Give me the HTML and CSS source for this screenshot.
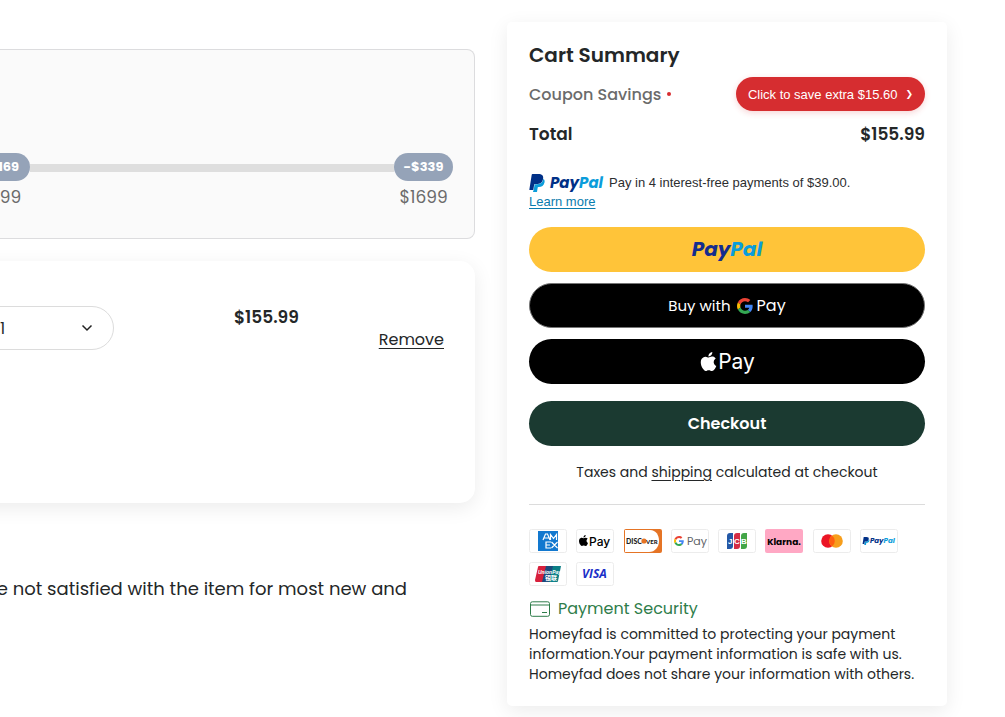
FILE: index.html
```html
<!DOCTYPE html>
<html lang="en">
<head>
<meta charset="utf-8">
<meta name="viewport" content="width=device-width, initial-scale=1">
<title>Cart</title>
<link rel="stylesheet" href="styles.css">
</head>
<body>
<svg class="sprite" aria-hidden="true">
  <symbol id="pp-mark" viewBox="0 0 24 24">
    <path fill="#0b9ddb" d="M21.222 6.917a3.35 3.35 0 0 0-.607-.541c-.013.076-.026.175-.041.254-.93 4.778-4.005 7.201-9.138 7.201h-2.19a.563.563 0 0 0-.556.479l-1.187 7.527h-.506l-.24 1.516a.56.56 0 0 0 .554.647h3.882c.46 0 .85-.334.922-.788.06-.26.76-4.852.816-5.09a.932.932 0 0 1 .923-.788h.58c3.76 0 6.705-1.528 7.565-5.946.36-1.847.174-3.388-.777-4.471z"/>
    <path fill="#003087" d="M7.076 21.337H2.47a.641.641 0 0 1-.633-.74L4.944.901C5.026.382 5.474 0 5.998 0h7.46c2.57 0 4.578.543 5.69 1.81 1.01 1.15 1.304 2.42 1.012 4.287-.023.143-.047.288-.077.437-.983 5.05-4.349 6.797-8.647 6.797h-2.19c-.524 0-.968.382-1.05.9l-1.12 7.106z"/>
  </symbol>
  <symbol id="apple-mark" viewBox="0 0 24 24">
    <path d="M12.152 6.896c-.948 0-2.415-1.078-3.96-1.04-2.04.027-3.91 1.183-4.961 3.014-2.117 3.675-.546 9.103 1.519 12.09 1.013 1.454 2.208 3.09 3.792 3.039 1.52-.065 2.09-.987 3.935-.987 1.831 0 2.35.987 3.96.948 1.637-.026 2.676-1.48 3.676-2.948 1.156-1.688 1.636-3.325 1.662-3.415-.039-.013-3.182-1.221-3.22-4.857-.026-3.04 2.48-4.494 2.597-4.559-1.429-2.09-3.623-2.324-4.39-2.376-2-.156-3.675 1.09-4.61 1.09zM15.53 3.83c.843-1.012 1.4-2.427 1.245-3.83-1.207.052-2.662.805-3.532 1.818-.78.896-1.454 2.338-1.273 3.714 1.338.104 2.715-.688 3.559-1.701"/>
  </symbol>
  <symbol id="google-mark" viewBox="0 0 48 48">
    <path fill="#ea4335" d="M24 9.5c3.54 0 6.71 1.22 9.21 3.6l6.85-6.85C35.9 2.38 30.47 0 24 0 14.62 0 6.51 5.38 2.56 13.22l7.98 6.19C12.43 13.72 17.74 9.5 24 9.5z"/>
    <path fill="#4285f4" d="M46.98 24.55c0-1.57-.15-3.09-.38-4.55H24v9.02h12.94c-.58 2.96-2.26 5.48-4.78 7.18l7.73 6c4.51-4.18 7.09-10.36 7.09-17.65z"/>
    <path fill="#fbbc05" d="M10.53 28.59c-.48-1.45-.76-2.99-.76-4.59s.27-3.14.76-4.59l-7.98-6.19C.92 16.46 0 20.12 0 24c0 3.88.92 7.54 2.56 10.78l7.97-6.19z"/>
    <path fill="#34a853" d="M24 48c6.48 0 11.93-2.13 15.89-5.81l-7.73-6c-2.15 1.45-4.92 2.3-8.16 2.3-6.26 0-11.57-4.22-13.47-9.91l-7.98 6.19C6.51 42.62 14.62 48 24 48z"/>
  </symbol>
</svg>

<main class="page">
  <section class="cart">
    <div class="savings-panel">
      <div class="slider">
        <div class="stop">
          <span class="badge">-$169</span>
          <span class="amount">$799</span>
        </div>
        <div class="track"></div>
        <div class="stop">
          <span class="badge">-$339</span>
          <span class="amount">$1699</span>
        </div>
      </div>
    </div>

    <div class="item-panel">
      <div class="quantity">
        <select class="quantity-select" aria-label="Quantity">
          <option>1</option>
          <option>2</option>
          <option>3</option>
        </select>
        <svg class="chevron" viewBox="0 0 12 8" aria-hidden="true"><path d="M1.500 1.500 6 6l4.500-4.500" fill="none" stroke="#222" stroke-width="1.500"/></svg>
      </div>
      <span class="price">$155.99</span>
      <a class="remove" href="#">Remove</a>
    </div>

    <p class="policy">are not satisfied with the item for most new and</p>
  </section>

  <aside class="summary">
    <h2 class="summary-title">Cart Summary</h2>
    <div class="row coupon-row">
      <span class="coupon-label">Coupon Savings <span class="dot"></span></span>
      <button class="coupon" type="button">Click to save extra $15.60 <span class="coupon-arrow">❯</span></button>
    </div>
    <div class="row total-row">
      <span>Total</span>
      <span>$155.99</span>
    </div>

    <div class="installments">
      <div class="installments-line">
        <svg class="pp-logo" viewBox="0 0 74 20" role="img" aria-label="PayPal">
          <use href="#pp-mark" x="-1" y="1" width="18" height="18"/>
          <text class="pp-word" x="21" y="15" font-size="15"><tspan fill="#003087">Pay</tspan><tspan fill="#0b9ddb">Pal</tspan></text>
        </svg>
        <span>Pay in 4 interest-free payments of $39.00.</span>
      </div>
      <a class="learn" href="#">Learn more</a>
    </div>

    <div class="wallets">
      <button class="pay-button paypal" type="button" aria-label="PayPal">
        <svg class="paypal-word" viewBox="0 0 72 26" aria-hidden="true"><text class="pp-word" x="36" y="19" font-size="20" text-anchor="middle"><tspan fill="#142c8e">Pay</tspan><tspan fill="#0b9ddb">Pal</tspan></text></svg>
      </button>
      <button class="pay-button gpay" type="button">
        <span>Buy with</span>
        <svg class="google-icon" aria-hidden="true"><use href="#google-mark"/></svg>
        <span class="gpay-word">Pay</span>
      </button>
      <button class="pay-button applepay" type="button">
        <svg class="apple-icon" aria-hidden="true"><use href="#apple-mark"/></svg>
        <span>Pay</span>
      </button>
    </div>

    <button class="pay-button checkout" type="button">Checkout</button>
    <p class="taxes">Taxes and <a href="#">shipping</a> calculated at checkout</p>

    <ul class="methods">
      <li><svg viewBox="0 0 38 24" role="img" aria-label="American Express"><rect class="plate" x=".5" y=".5" width="37" height="23" rx="2"/><path fill="#1278cf" d="M9 2h20v20H9z"/><path fill="none" stroke="#fff" stroke-width="1.200" d="M14 11l2.500-6h2l2.500 6M15 9h5M21.500 11V5.500l3 4 3-4V11M22 13h-5v6h5M17 16h4M22.500 13l6 6M28.500 13l-6 6"/></svg></li>
      <li><svg viewBox="0 0 38 24" role="img" aria-label="Apple Pay"><rect class="plate" x=".5" y=".5" width="37" height="23" rx="2"/><use href="#apple-mark" x="2" y="6" width="11" height="11"/><text x="13" y="17" font-family="Inter" font-size="12" font-weight="500">Pay</text></svg></li>
      <li><svg viewBox="0 0 38 24" role="img" aria-label="Discover"><rect x="0" y="0" width="38" height="24" rx="2" fill="#e57425"/><path fill="#fff" d="M1 1h25c6 0 9 5 9 11s-4 11-10 11H1z"/><text x="2" y="15" font-family="Lato" font-weight="900" font-size="7" fill="#222">DISC</text><circle cx="20" cy="12" r="2.600" fill="#e57425"/><text x="22" y="15" font-family="Lato" font-weight="900" font-size="6" fill="#222">VER</text></svg></li>
      <li><svg viewBox="0 0 38 24" role="img" aria-label="Google Pay"><rect class="plate" x=".5" y=".5" width="37" height="23" rx="2"/><use href="#google-mark" x="3" y="7" width="10" height="10"/><text x="16" y="16" font-family="Poppins" font-size="11" fill="#5f6368">Pay</text></svg></li>
      <li><svg viewBox="0 0 38 24" role="img" aria-label="JCB"><rect class="plate" x=".5" y=".5" width="37" height="23" rx="2"/><path fill="#2458a6" d="M9 7q0-3 3-3h3v13q0 3-3 3H9z"/><path fill="#d42c45" d="M16 7q0-3 3-3h3v13q0 3-3 3h-3z"/><path fill="#43a648" d="M23 7q0-3 3-3h3v13q0 3-3 3h-3z"/><g font-family="Liberation Sans" font-weight="700" font-size="8" fill="#fff"><text x="10" y="15">J</text><text x="16" y="15">C</text><text x="23" y="15">B</text></g></svg></li>
      <li><svg viewBox="0 0 38 24" role="img" aria-label="Klarna"><rect width="38" height="24" rx="2" fill="#ffa8c4"/><text x="19" y="16" text-anchor="middle" font-family="Poppins" font-weight="700" font-size="9">Klarna.</text></svg></li>
      <li><svg viewBox="0 0 38 24" role="img" aria-label="Mastercard"><rect class="plate" x=".5" y=".5" width="37" height="23" rx="2"/><circle cx="15" cy="12" r="6.800" fill="#eb1525"/><circle cx="23" cy="12" r="6.800" fill="#f79e1b"/><path fill="#ff5f10" d="M19 6.500a6.800 6.800 0 0 1 0 11 6.800 6.800 0 0 1 0-11z"/></svg></li>
      <li><svg viewBox="0 0 38 24" role="img" aria-label="PayPal"><rect class="plate" x=".5" y=".5" width="37" height="23" rx="2"/><use href="#pp-mark" x="2" y="8" width="8" height="8"/><text class="pp-word" x="10" y="14" font-size="7"><tspan fill="#003087">Pay</tspan><tspan fill="#0b9ddb">Pal</tspan></text></svg></li>
      <li><svg viewBox="0 0 38 24" role="img" aria-label="UnionPay"><rect class="plate" x=".5" y=".5" width="37" height="23" rx="2"/><path fill="#d8203c" d="M10 4h8l-4 16H7q-1 0-1-2L9 5q0-1 1-1z"/><path fill="#1c4a7c" d="M17 4h8l-4 16h-8z"/><path fill="#0c7f86" d="M24 4h8l-3 15q0 1-1 1h-8z"/><text x="9" y="12" font-family="Liberation Sans" font-weight="700" font-style="italic" font-size="5" fill="#fff">UnionPay</text><text x="16" y="18" font-family="Noto Sans CJK SC" font-weight="700" font-size="6" fill="#fff">银联</text></svg></li>
      <li><svg viewBox="0 0 38 24" role="img" aria-label="Visa"><rect class="plate" x=".5" y=".5" width="37" height="23" rx="2"/><text x="6" y="16" font-family="Open Sans" font-weight="700" font-style="italic" font-size="12" fill="#1a2fc8">VISA</text></svg></li>
    </ul>

    <div class="security">
      <svg class="card-icon" viewBox="0 0 22 16" aria-hidden="true"><rect x="1.500" y=".8" width="19" height="14.500" rx="1.800" fill="none" stroke="#2f7d4a"/><path d="M1.500 4h19M13 11.500h5" stroke="#2f7d4a" fill="none"/></svg>
      <h3 class="security-title">Payment Security</h3>
    </div>
    <p class="security-text">Homeyfad is committed to protecting your payment<br>information.Your payment information is safe with us.<br>Homeyfad does not share your information with others.</p>
  </aside>
</main>
</body>
</html>
```
FILE: styles.css
```css
* { box-sizing: border-box; }

body {
  margin: 0;
  background: #fff;
  color: #242728;
  font-family: Poppins, Inter, "Liberation Sans", sans-serif;
  font-size: 16px;
  overflow-x: hidden;
}

h2, h3, p, ul { margin: 0; padding: 0; }
button { border: 0; padding: 0; font: inherit; cursor: pointer; }
a { color: inherit; text-underline-offset: 3px; }
.sprite { display: none; }

.page {
  display: flex;
  align-items: flex-start;
  gap: 32px;
  padding: 22px 58px 11px 0;
}

/* Cart column */
.cart {
  flex: 1;
  min-width: 0;
  margin-left: -29px;
  padding-top: 27px;
}

.savings-panel {
  padding: 103px 21px 27px 0;
  border: 1px solid #dcdcde;
  border-left: 0;
  border-radius: 0 8px 8px 0;
  background: #fafafa;
}

.slider { display: flex; }
.track { flex: 1; height: 8px; margin-top: 11px; background: #dedede; }
.stop { display: flex; flex-direction: column; align-items: center; width: 59px; gap: 2px; }

.badge {
  width: 100%;
  border-radius: 14px;
  background: #95a3b8;
  color: #fff;
  font-size: 13px;
  font-weight: 700;
  line-height: 28px;
  text-align: center;
}

.amount { color: #6b6b6b; font-size: 17px; line-height: 28px; }

.item-panel {
  display: flex;
  align-items: flex-start;
  min-height: 242px;
  margin-top: 22px;
  padding: 45px 31px 45px 0;
  border-radius: 0 15px 15px 0;
  background: #fff;
  box-shadow: 0 5px 20px rgba(0, 0, 0, 0.08);
}

.quantity { display: grid; align-items: center; width: 143px; }
.quantity-select, .chevron { grid-area: 1 / 1; }
.quantity-select {
  width: 100%;
  height: 44px;
  padding: 0 0 0 28px;
  border: 1px solid #dcdcdc;
  border-radius: 22px;
  background: #fff;
  color: #242728;
  font: inherit;
  appearance: none;
}
.chevron { justify-self: end; width: 12px; height: 8px; margin-right: 21px; pointer-events: none; }
.price { margin-left: 120px; font-size: 17px; font-weight: 600; line-height: 22px; }
.remove { margin: 22px 0 0 auto; line-height: 24px; }

.policy {
  margin-top: 72px;
  padding-right: 68px;
  font-size: 18px;
  line-height: 28px;
  text-align: right;
  white-space: nowrap;
}

/* Summary column */
.summary {
  flex: 0 0 440px;
  padding: 22px;
  border-radius: 5px;
  background: #fff;
  box-shadow: 0 5px 20px rgba(0, 0, 0, 0.08);
}

.summary-title { font-size: 20px; font-weight: 600; line-height: 22px; }
.row { display: flex; align-items: center; justify-content: space-between; }
.coupon-row { margin-top: 11px; }
.coupon-label { display: flex; align-items: center; gap: 6px; color: #6b6b6b; font-weight: 500; }
.dot { width: 4px; height: 4px; border-radius: 50%; background: #d72c30; }

.coupon {
  display: flex;
  align-items: center;
  gap: 8px;
  height: 34px;
  padding: 0 12px;
  border-radius: 17px;
  background: #d62d30;
  box-shadow: 0 2px 6px rgba(214, 45, 48, 0.2);
  color: #fff;
  font-family: "Liberation Sans", sans-serif;
  font-size: 13px;
}
.coupon-arrow { font-family: "DejaVu Sans", sans-serif; font-size: 9px; line-height: 16px; }

.total-row { margin-top: 11px; font-size: 17px; font-weight: 600; line-height: 24px; }

.installments {
  margin-top: 27px;
  color: #2c2e2f;
  font-family: "Liberation Sans", sans-serif;
  font-size: 13px;
  line-height: 19px;
}
.installments-line { display: flex; align-items: center; gap: 6px; height: 19px; }
.pp-logo { width: 74px; height: 20px; overflow: visible; }
.pp-word { font-family: Poppins, "Open Sans", sans-serif; font-style: italic; font-weight: 700; }
.learn { display: block; color: #0a7cae; text-underline-offset: 2px; }

.wallets { display: grid; gap: 11px; margin-top: 16px; }
.pay-button {
  display: flex;
  align-items: center;
  justify-content: center;
  width: 100%;
  height: 45px;
  border-radius: 23px;
}
.paypal { background: #ffc439; }
.paypal-word { width: 72px; height: 26px; overflow: visible; }
.gpay, .applepay { background: #000; color: #fff; }
.gpay { gap: 6px; border: 1px solid #757575; font-size: 15px; }
.google-icon { width: 16px; height: 16px; }
.gpay-word { margin-left: -2px; font-size: 16px; }
.applepay { gap: 0; font-family: Inter, sans-serif; font-size: 21px; }
.apple-icon { width: 19px; height: 19px; fill: #fff; }

.checkout { margin-top: 17px; background: #1b3a31; color: #fff; font-weight: 600; }
.taxes { margin-top: 16px; font-size: 14px; line-height: 20px; text-align: center; }

.methods {
  display: grid;
  grid-template-columns: repeat(8, 38px);
  justify-content: space-between;
  row-gap: 9px;
  margin-top: 22px;
  padding: 24px 27px 0 0;
  border-top: 1px solid #dcdcdc;
  list-style: none;
}
.methods svg { display: block; width: 38px; height: 24px; }
.plate { fill: #fff; stroke: #ececec; }

.security { display: flex; align-items: center; gap: 7px; margin-top: 13px; color: #2f7d4a; }
.card-icon { width: 22px; height: 16px; }
.security-title { font-size: 16px; font-weight: 400; line-height: 20px; }
.security-text { margin-top: 5px; font-size: 14px; line-height: 20px; white-space: nowrap; }
```
